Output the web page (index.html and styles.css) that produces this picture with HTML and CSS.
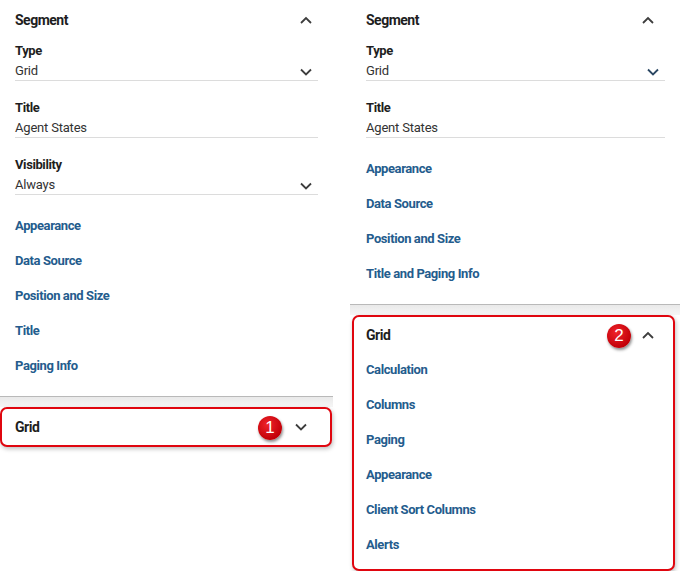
FILE: index.html
```html
<!DOCTYPE html>
<html lang="en">
<head>
  <meta charset="UTF-8">
  <meta name="viewport" content="width=device-width, initial-scale=1.0">
  <title>Segment properties</title>
  <link rel="stylesheet" href="styles.css">
</head>
<body>
  <div class="page">
    <!-- before: Grid section collapsed -->
    <div class="panel left">
      <section class="segment">
        <div class="section-head">
          <span class="head-title">Segment</span>
          <svg class="chev" width="12" height="8" viewBox="0 0 12 8"><polyline points="1,7 6,2 11,7" /></svg>
        </div>
        <div class="field">
          <label>Type</label>
          <div class="value">Grid
            <svg class="chev drop" width="12" height="8" viewBox="0 0 12 8"><polyline points="1,1.5 6,6.5 11,1.5" /></svg>
          </div>
        </div>
        <div class="field">
          <label>Title</label>
          <div class="value">Agent States</div>
        </div>
        <div class="field">
          <label>Visibility</label>
          <div class="value">Always
            <svg class="chev drop" width="12" height="8" viewBox="0 0 12 8"><polyline points="1,1.5 6,6.5 11,1.5" /></svg>
          </div>
        </div>
        <nav class="links">
          <a href="#">Appearance</a>
          <a href="#">Data Source</a>
          <a href="#">Position and Size</a>
          <a href="#">Title</a>
          <a href="#">Paging Info</a>
        </nav>
      </section>
      <div class="shade"></div>
      <div class="callout">
        <div class="callout-head">
          <span class="head-title">Grid</span>
          <span class="badge">1</span>
          <svg class="chev" width="12" height="8" viewBox="0 0 12 8"><polyline points="1,1.5 6,6.5 11,1.5" /></svg>
        </div>
      </div>
    </div>

    <!-- after: Grid section expanded -->
    <div class="panel right">
      <section class="segment">
        <div class="section-head">
          <span class="head-title">Segment</span>
          <svg class="chev" width="12" height="8" viewBox="0 0 12 8"><polyline points="1,7 6,2 11,7" /></svg>
        </div>
        <div class="field">
          <label>Type</label>
          <div class="value">Grid
            <svg class="chev drop blue" width="12" height="8" viewBox="0 0 12 8"><polyline points="1,1.5 6,6.5 11,1.5" /></svg>
          </div>
        </div>
        <div class="field">
          <label>Title</label>
          <div class="value">Agent States</div>
        </div>
        <nav class="links">
          <a href="#">Appearance</a>
          <a href="#">Data Source</a>
          <a href="#">Position and Size</a>
          <a href="#">Title and Paging Info</a>
        </nav>
      </section>
      <div class="shade"></div>
      <div class="callout open">
        <div class="callout-head">
          <span class="head-title">Grid</span>
          <span class="badge">2</span>
          <svg class="chev" width="12" height="8" viewBox="0 0 12 8"><polyline points="1,7 6,2 11,7" /></svg>
        </div>
        <nav class="links">
          <a href="#">Calculation</a>
          <a href="#">Columns</a>
          <a href="#">Paging</a>
          <a href="#">Appearance</a>
          <a href="#">Client Sort Columns</a>
          <a href="#">Alerts</a>
        </nav>
      </div>
    </div>
  </div>
</body>
</html>
```

FILE: styles.css
```css
body {
  margin: 0;
  background: #fff;
  font-family: Roboto, "Noto Sans", sans-serif;
  color: #222;
}

.page {
  display: flex;
  align-items: flex-start;
}

.panel.left {
  width: 333px;
}

.panel.right {
  width: 330px;
  margin-left: 17px;
}

/* segment section */
.segment {
  padding: 0 15px 13px 15px;
  border-bottom: 1px solid #b9b9b9;
}

.right .segment {
  padding-left: 16px;
}

.section-head {
  height: 40px;
  display: flex;
  align-items: center;
  justify-content: space-between;
  padding-right: 6px;
}

.right .section-head {
  padding-right: 11px;
}

.head-title {
  font-size: 14px;
  font-weight: bold;
  letter-spacing: -0.5px;
  color: #1e1e1e;
}

.chev {
  display: block;
  fill: none;
  stroke: #3d3d3d;
  stroke-width: 1.8;
}

.chev.blue {
  stroke: #2b4763;
}

.field {
  margin-top: 18px;
  border-bottom: 1px solid #dcdcdc;
}

.section-head + .field {
  margin-top: 2px;
}

.field label {
  display: block;
  font-size: 13px;
  line-height: 18px;
  font-weight: bold;
  letter-spacing: -0.4px;
  color: #1e1e1e;
}

.field .value {
  display: flex;
  align-items: center;
  justify-content: space-between;
  height: 20px;
  font-size: 13px;
  letter-spacing: -0.2px;
  color: #333;
}

.field .drop {
  margin-right: 6px;
  margin-top: 3px;
}

.links {
  display: flex;
  flex-direction: column;
  padding-top: 13px;
}

.links a {
  line-height: 35px;
  font-size: 13px;
  font-weight: bold;
  letter-spacing: -0.4px;
  color: #245c8d;
  text-decoration: none;
}

.shade {
  height: 10px;
  background: linear-gradient(#e9e9e9, #f6f6f6);
}

/* highlighted grid section */
.callout {
  position: relative;
  border: 2px solid #e0060f;
  border-radius: 7px;
  background: #fff;
  box-shadow: 1px 2px 4px rgba(0, 0, 0, 0.25);
  padding: 0 23px 0 13px;
  box-sizing: border-box;
  width: 332px;
}

.callout.open {
  width: 323px;
  margin-left: 2px;
  padding: 0 19px 7px 12px;
}

.callout-head {
  height: 36px;
  display: flex;
  align-items: center;
  justify-content: space-between;
}

.callout.open .callout-head {
  height: 35px;
}

.callout .links {
  padding-top: 0;
}

.badge {
  position: absolute;
  top: 7px;
  right: 48px;
  width: 24px;
  height: 24px;
  border-radius: 50%;
  background: radial-gradient(circle at 40% 35%, #f0242b, #c20008 70%);
  box-shadow: 1px 2px 3px rgba(0, 0, 0, 0.45);
  color: #fff;
  font-family: "Liberation Sans", Arial, sans-serif;
  font-size: 17px;
  line-height: 24px;
  text-align: center;
}

.callout.open .badge {
  top: 7px;
  right: 42px;
}
```
